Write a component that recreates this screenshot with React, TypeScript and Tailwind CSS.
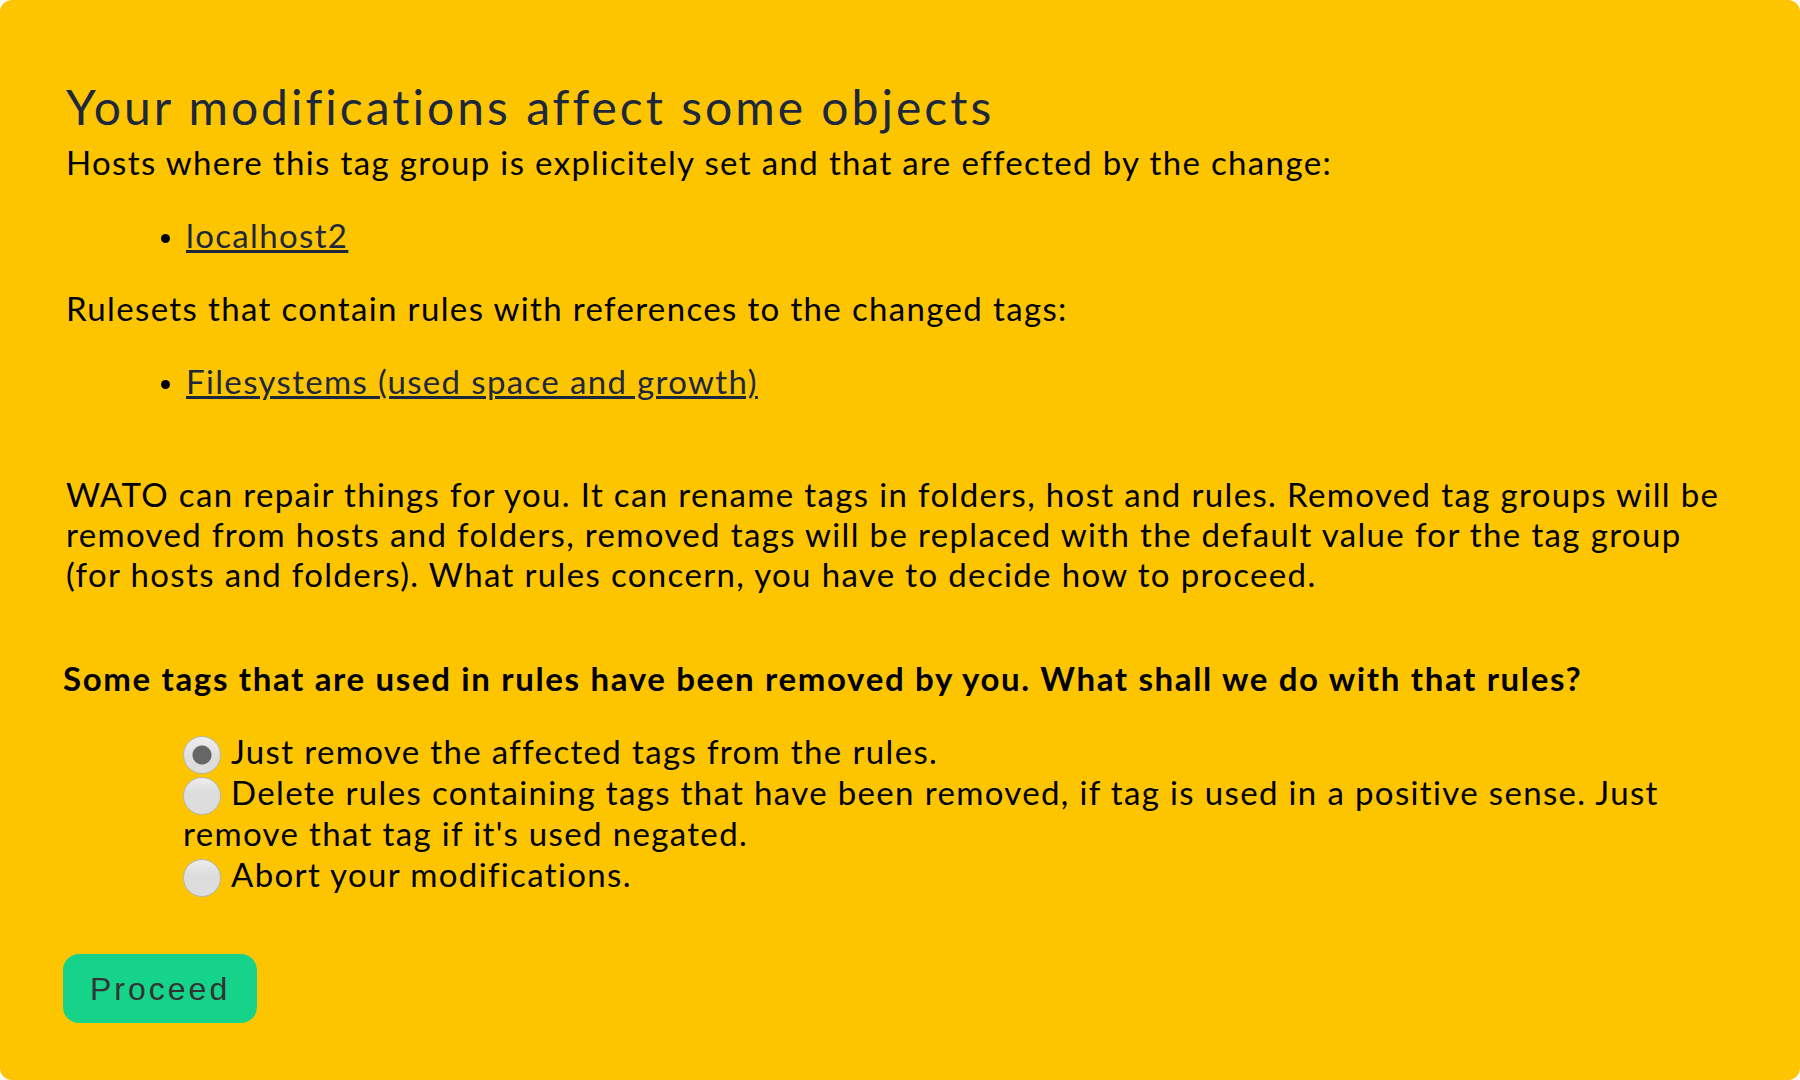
import React from "react";

const options = [
  "Just remove the affected tags from the rules.",
  "Delete rules containing tags that have been removed, if tag is used in a positive sense. Just remove that tag if it's used negated.",
  "Abort your modifications.",
];

function AffectedList({ label }: { label: string }) {
  return (
    <ul className="my-[33px] list-disc pl-30 marker:text-[27px]">
      <li>
        <a href="#" className="text-[#1e283c] underline decoration-3 underline-offset-2">{label}</a>
      </li>
    </ul>
  );
}

export default function App() {
  return (
    <main className="min-h-screen bg-white">
      <form
        onSubmit={(e) => e.preventDefault()}
        className="min-h-screen rounded-xl bg-[#fdc500] px-[63px] pt-[79px] pb-14 font-['Lato',sans-serif] text-[33px] leading-[40px] tracking-[0.041em] text-black"
      >
        <div className="px-[3px]">
          <h1 className="text-[48px] leading-[56px] tracking-[3px] text-[#1e283c]">Your modifications affect some objects</h1>
          <p className="mt-[7px]">Hosts where this tag group is explicitely set and that are effected by the change:</p>
          <AffectedList label="localhost2" />
          <p>Rulesets that contain rules with references to the changed tags:</p>
          <AffectedList label="Filesystems (used space and growth)" />
          <p className="mt-[73px]">
            WATO can repair things for you. It can rename tags in folders, host and rules. Removed tag groups will be removed from hosts and folders, removed tags will be replaced with the default value for the tag group (for hosts and folders). What rules concern, you have to decide how to proceed.
          </p>
        </div>
        <fieldset className="mt-16">
          <legend className="font-bold tracking-wider">Some tags that are used in rules have been removed by you. What shall we do with that rules?</legend>
          <div className="mt-[33px] pl-30 leading-[41px]">
            {options.map((text, i) => (
              <label key={text} className="block">
                <input
                  type="radio"
                  name="action"
                  defaultChecked={i === 0}
                  className="-mt-[5px] mr-[10px] -mb-[3px] size-[38px] appearance-none rounded-full border border-[#b5b5b5] bg-linear-to-b from-[#eee] to-[#ddd] to-40% align-middle checked:bg-[radial-gradient(circle,#666_9px,transparent_10px),linear-gradient(#eee,#ddd_60%)]"
                />
                {text}
              </label>
            ))}
          </div>
        </fieldset>
        <button type="submit" className="mt-[59px] block h-[69px] rounded-2xl bg-[#15d388] px-[27px] font-['Liberation_Sans',sans-serif] text-[32px] tracking-[3px] text-[#333]">
          Proceed
        </button>
      </form>
    </main>
  );
}
